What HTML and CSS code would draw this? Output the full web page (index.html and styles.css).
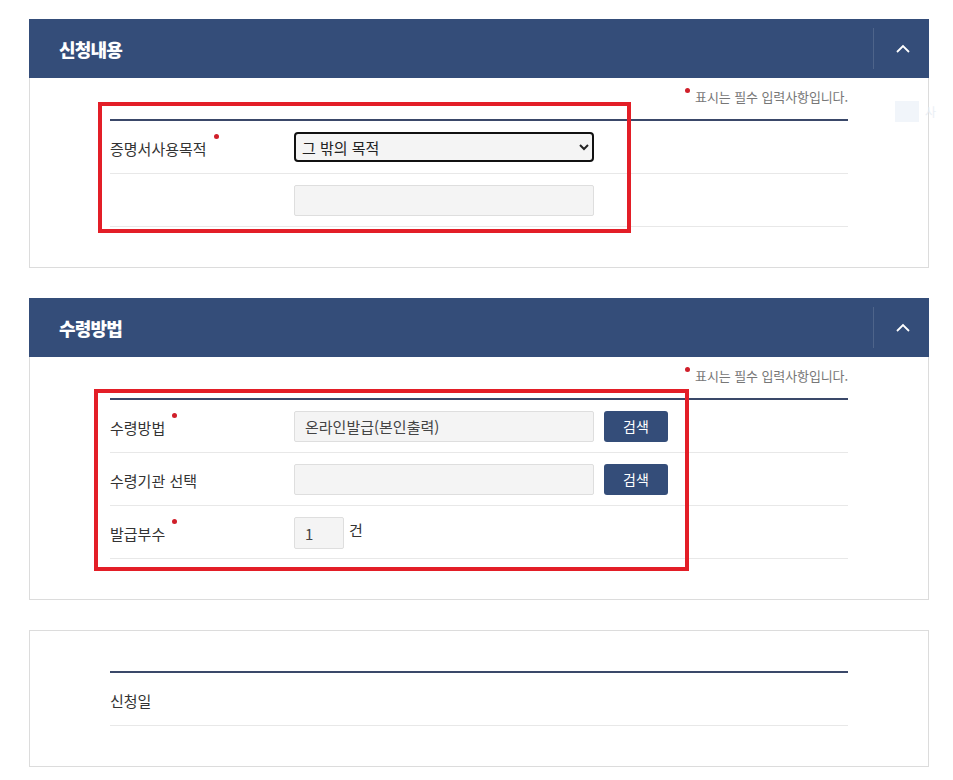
FILE: index.html
```html
<!DOCTYPE html>
<html lang="ko">
  <head>
    <meta charset="UTF-8" />
    <meta name="viewport" content="width=device-width, initial-scale=1.0" />
    <title>증명서 신청</title>
    <link rel="stylesheet" href="styles.css">
  </head>
  <body>
    <div class="page">
      <section class="panel">
        <div class="panel-head">
          <h2>신청내용</h2>
          <button class="toggle" type="button" aria-label="접기">
            <svg width="14" height="9" viewBox="0 0 14 9"><path d="M1 8 L7 2 L13 8" fill="none" stroke="#fff" stroke-width="1.8"/></svg>
          </button>
        </div>
        <div class="panel-body">
          <p class="note"><span class="dot"></span>표시는 필수 입력사항입니다.</p>
          <div class="form-table">
            <div class="form-row">
              <div class="label">증명서사용목적<span class="req"></span></div>
              <div class="field">
                <select class="select">
                  <option>그 밖의 목적</option>
                </select>
              </div>
            </div>
            <div class="form-row">
              <div class="label"></div>
              <div class="field"><input class="input" type="text" /></div>
            </div>
          </div>
          <div class="mark mark-1"></div>
        </div>
      </section>

      <section class="panel">
        <div class="panel-head">
          <h2>수령방법</h2>
          <button class="toggle" type="button" aria-label="접기">
            <svg width="14" height="9" viewBox="0 0 14 9"><path d="M1 8 L7 2 L13 8" fill="none" stroke="#fff" stroke-width="1.8"/></svg>
          </button>
        </div>
        <div class="panel-body">
          <p class="note"><span class="dot"></span>표시는 필수 입력사항입니다.</p>
          <div class="form-table">
            <div class="form-row">
              <div class="label">수령방법<span class="req"></span></div>
              <div class="field">
                <input class="input" type="text" value="온라인발급(본인출력)" readonly />
                <button class="btn" type="button">검색</button>
              </div>
            </div>
            <div class="form-row">
              <div class="label">수령기관 선택</div>
              <div class="field">
                <input class="input" type="text" readonly />
                <button class="btn" type="button">검색</button>
              </div>
            </div>
            <div class="form-row">
              <div class="label">발급부수<span class="req"></span></div>
              <div class="field">
                <input class="input count" type="text" value="1" readonly />
                <span class="unit">건</span>
              </div>
            </div>
          </div>
          <div class="mark mark-2"></div>
        </div>
      </section>

      <section class="panel">
        <div class="panel-body plain">
          <div class="form-table">
            <div class="form-row">
              <div class="label">신청일</div>
              <div class="field"></div>
            </div>
          </div>
        </div>
      </section>
    </div>

    <div class="ghost"><span class="ghost-box"></span>사</div>
  </body>
</html>
```

FILE: styles.css
```css
body {
  margin: 0;
  font-family: "Noto Sans CJK KR", "Noto Sans", sans-serif;
  color: #333;
  background: #fff;
}

.page {
  width: 900px;
  padding: 19px 0 0 29px;
  display: flex;
  flex-direction: column;
  gap: 30px;
}

.panel {
  border: 1px solid #dcdcdc;
  border-top: none;
}

.panel-head {
  height: 59px;
  margin: 0 -1px;
  background: #344d79;
  display: flex;
  align-items: center;
  justify-content: space-between;
}

.panel-head h2 {
  margin: 0 0 0 30px;
  font-size: 18px;
  font-weight: 900;
  color: #fff;
  letter-spacing: -0.8px;
}

.toggle {
  width: 56px;
  height: 41px;
  border: none;
  border-left: 1px solid rgba(255, 255, 255, 0.13);
  background: transparent;
  display: flex;
  align-items: center;
  justify-content: center;
  padding: 0 0 0 2px;
}

.panel-body {
  position: relative;
  padding: 9px 80px 40px 80px;
}

.panel-body.plain {
  padding-top: 40px;
  border-top: 1px solid #dcdcdc;
}

.note {
  margin: 0 0 12px;
  text-align: right;
  font-size: 13px;
  line-height: 20px;
  color: #777;
  letter-spacing: -0.1px;
}

.dot,
.req {
  display: inline-block;
  width: 5px;
  height: 5px;
  border-radius: 50%;
  background: #d01f2a;
  vertical-align: top;
}

.dot {
  margin: 1px 5px 0 0;
}

.req {
  margin: 0 0 0 7px;
  position: relative;
  top: -5px;
}

.form-table {
  border-top: 2px solid #3a4869;
}

.form-row {
  display: flex;
  align-items: center;
  min-height: 52px;
  border-bottom: 1px solid #e8e8e8;
}

.label {
  width: 184px;
  font-size: 15px;
  color: #333;
  line-height: 20px;
  padding-top: 4px;
}

.field {
  display: flex;
  align-items: center;
  gap: 10px;
}

.select {
  width: 300px;
  height: 30px;
  border: 2px solid #111;
  border-radius: 4px;
  background: #f4f4f4;
  font-family: inherit;
  font-size: 15px;
  color: #222;
  padding: 0 2px;
  outline: none;
}

.input {
  box-sizing: border-box;
  width: 300px;
  height: 31px;
  border: 1px solid #dedede;
  border-radius: 2px;
  background: #f4f4f4;
  font-family: inherit;
  font-size: 15px;
  color: #444;
  padding: 0 10px;
  outline: none;
}

.input.count {
  width: 50px;
  height: 32px;
  margin-top: 2px;
}

.unit {
  font-size: 15px;
  color: #333;
  margin: -6px 0 0 -5px;
}

.btn {
  width: 64px;
  height: 31px;
  border: none;
  border-radius: 3px;
  background: #344d79;
  color: #fff;
  font-family: inherit;
  font-size: 14px;
}

.mark {
  position: absolute;
  border: 4px solid #e31e27;
  box-sizing: border-box;
  pointer-events: none;
}

.mark-1 {
  left: 68px;
  top: 24px;
  width: 533px;
  height: 131px;
}

.mark-2 {
  left: 64px;
  top: 32px;
  width: 595px;
  height: 182px;
}

.ghost {
  position: absolute;
  left: 895px;
  top: 101px;
  display: flex;
  align-items: center;
  gap: 6px;
  font-size: 12px;
  color: #e6ecf4;
  opacity: 0.8;
}

.ghost-box {
  display: inline-block;
  width: 24px;
  height: 21px;
  background: #eef3fa;
}
```
